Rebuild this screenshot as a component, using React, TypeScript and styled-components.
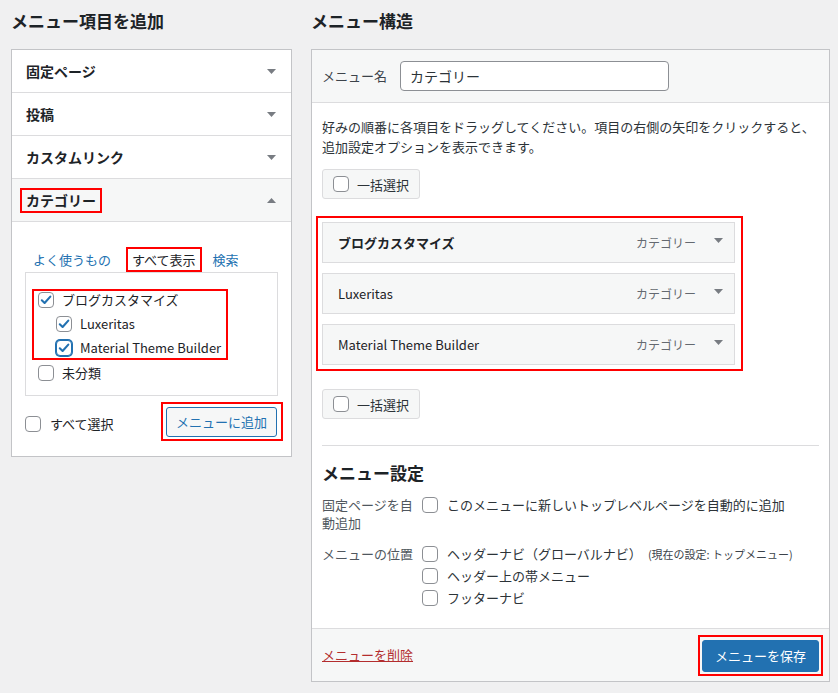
import React from "react";
import styled, { createGlobalStyle } from "styled-components";

const GlobalStyle = createGlobalStyle`
  html, body { margin: 0; padding: 0; background: #f0f0f1; }
  body {
    font-family: "Noto Sans CJK JP", "Noto Sans", sans-serif;
    color: #1d2327;
    font-size: 13px;
  }
  * { box-sizing: border-box; }
`;

const Page = styled.div`
  display: flex;
  align-items: flex-start;
  gap: 19px;
  width: 838px;
  padding: 10px 8px 12px 11px;
`;

const Column = styled.div<{ $w: number }>`
  width: ${(p) => p.$w}px;
  flex: none;
`;

const Title = styled.h2`
  margin: 0 0 17px;
  font-size: 17px;
  line-height: 22px;
  font-weight: 700;
  color: #1d2327;
`;

const Panel = styled.div`
  background: #fff;
  border: 1px solid #c3c4c7;
`;

/* ---------- left: accordion ---------- */
const AccRow = styled.div<{ $open?: boolean }>`
  display: flex;
  align-items: center;
  justify-content: space-between;
  height: 43px;
  padding: 0 15px 0 14px;
  border-bottom: 1px solid #dcdcde;
  background: ${(p) => (p.$open ? "#f6f7f7" : "#fff")};
  font-size: 14px;
  font-weight: 700;
  line-height: 20px;
  color: #1d2327;
`;

const MarkedTitle = styled.span`
  border: 2px solid #f00;
  margin-left: -6px;
  padding: 0 4px;
  line-height: 21px;
`;

const CatBody = styled.div`
  padding: 25px 13px 15px;
`;

const Tabs = styled.div`
  display: flex;
  height: 25px;
  font-size: 13px;
`;

const Tab = styled.span<{ $active?: boolean; $ml?: number }>`
  margin-left: ${(p) => p.$ml ?? 0}px;
  padding: ${(p) => (p.$active ? "0 4px" : "0 8px")};
  line-height: ${(p) => (p.$active ? "21px" : "25px")};
  border: ${(p) => (p.$active ? "2px solid #f00" : "none")};
  background: ${(p) => (p.$active ? "#fff" : "transparent")};
  color: ${(p) => (p.$active ? "#1d2327" : "#2271b1")};
`;

const ListBox = styled.div`
  display: flex;
  flex-direction: column;
  align-items: flex-start;
  border: 1px solid #dcdcde;
  padding: 16px 6px 13px;
`;

const MarkedList = styled.div`
  border: 2px solid #f00;
  padding: 0 5px 1px 4px;
  display: flex;
  flex-direction: column;
  gap: 6px;
`;

const CheckRow = styled.label<{ $indent?: number; $mt?: number; $ml?: number }>`
  display: flex;
  align-items: center;
  gap: 8px;
  height: 18px;
  font-size: 13px;
  line-height: 18px;
  white-space: nowrap;
  padding-left: ${(p) => p.$indent ?? 0}px;
  margin-top: ${(p) => p.$mt ?? 0}px;
  margin-left: ${(p) => p.$ml ?? 0}px;
  color: #1d2327;
`;

const BottomRow = styled.div`
  display: flex;
  align-items: center;
  justify-content: space-between;
  margin-top: 6px;
`;

const SelectAll = styled.label`
  display: flex;
  align-items: center;
  gap: 9px;
  padding-top: 5px;
  font-size: 13px;
  line-height: 18px;
`;

const MarkedBtn = styled.div<{ $pad: string; $mr?: number }>`
  display: flex;
  border: 2px solid #f00;
  padding: ${(p) => p.$pad};
  margin-right: ${(p) => p.$mr ?? 0}px;
`;

const SecondaryButton = styled.button`
  height: 30px;
  padding: 0 9px;
  border: 1px solid #2271b1;
  border-radius: 3px;
  background: #f6f7f7;
  color: #2271b1;
  font-family: inherit;
  font-size: 13px;
  line-height: 28px;
`;

/* ---------- checkbox ---------- */
const Box = styled.span<{ $focus?: boolean }>`
  width: 16px;
  height: 16px;
  flex: none;
  display: inline-flex;
  align-items: center;
  justify-content: center;
  border: 1px solid ${(p) => (p.$focus ? "#2271b1" : "#8c8f94")};
  box-shadow: ${(p) => (p.$focus ? "0 0 0 1px #2271b1" : "none")};
  border-radius: 4px;
  background: #fff;
`;

const Checkbox = ({ checked, focus }: { checked?: boolean; focus?: boolean }) => (
  <Box $focus={focus}>
    {checked && (
      <svg width="14" height="14" viewBox="0 0 14 14">
        <path
          d="M2.8 7.3 L5.6 10 L11.3 3.6"
          fill="none"
          stroke="#2271b1"
          strokeWidth="2.1"
          strokeLinecap="round"
          strokeLinejoin="round"
        />
      </svg>
    )}
  </Box>
);

const Arrow = ({ up }: { up?: boolean }) => (
  <svg width="9" height="5" viewBox="0 0 9 5">
    <polygon points={up ? "0,5 9,5 4.5,0" : "0,0 9,0 4.5,5"} fill="#787c82" />
  </svg>
);

/* ---------- right: menu structure ---------- */
const Header = styled.div`
  display: flex;
  align-items: center;
  gap: 13px;
  height: 53px;
  padding: 0 10px;
  background: #f6f7f7;
  border-bottom: 1px solid #dcdcde;
`;

const FieldLabel = styled.span`
  font-size: 13px;
  line-height: 18px;
  color: #3c434a;
`;

const NameInput = styled.input`
  width: 269px;
  height: 30px;
  padding: 0 9px;
  border: 1px solid #8c8f94;
  border-radius: 4px;
  background: #fff;
  font-family: inherit;
  font-size: 14px;
  color: #2c3338;
  outline: none;
`;

const Body = styled.div`
  padding: 14px 10px 21px;
`;

const Description = styled.p`
  margin: 0;
  font-size: 13px;
  line-height: 20px;
  color: #2c3338;
`;

const BulkButton = styled.label<{ $mt: number }>`
  display: flex;
  align-items: center;
  gap: 8px;
  width: 98px;
  height: 30px;
  margin-top: ${(p) => p.$mt}px;
  padding: 0 10px;
  background: #f6f7f7;
  border: 1px solid #dcdcde;
  border-radius: 3px;
  font-size: 13px;
  color: #2c3338;
`;

const MarkedItems = styled.div`
  width: 427px;
  margin: 17px 0 0 -6px;
  border: 2px solid #f00;
  padding: 4px 6px 4px 4px;
  display: flex;
  flex-direction: column;
  gap: 10px;
`;

const Item = styled.div`
  display: flex;
  align-items: center;
  height: 41px;
  padding: 0 11px 0 15px;
  background: #f6f7f7;
  border: 1px solid #dcdcde;
`;

const ItemTitle = styled.span<{ $jp?: boolean }>`
  font-size: 13px;
  font-weight: ${(p) => (p.$jp ? 700 : 400)};
  line-height: 18px;
  color: #1d2327;
`;

const ItemType = styled.span`
  margin-left: auto;
  font-size: 12px;
  line-height: 18px;
  color: #646970;
`;

const ItemArrow = styled.span`
  display: flex;
  margin: 0 0 4px 18px;
`;

const Separator = styled.hr`
  margin: 26px 0 0;
  border: 0;
  border-top: 1px solid #dcdcde;
`;

const SubTitle = styled.h3`
  margin: 16px 0 12px;
  font-size: 17px;
  line-height: 22px;
  font-weight: 700;
  color: #1d2327;
`;

const SettingRow = styled.div<{ $mt?: number }>`
  display: flex;
  gap: 5px;
  margin-top: ${(p) => p.$mt ?? 0}px;
`;

const SettingLabel = styled.div`
  width: 95px;
  flex: none;
  font-size: 13px;
  line-height: 18px;
  color: #50575e;
`;

const Options = styled.div`
  display: flex;
  flex-direction: column;
  gap: 4px;
`;

const Option = styled.label`
  display: flex;
  align-items: center;
  gap: 9px;
  height: 18px;
  font-size: 13px;
  line-height: 18px;
  color: #2c3338;
  white-space: nowrap;
`;

const Note = styled.span`
  margin-left: 6px;
  font-size: 11px;
  color: #3c434a;
`;

const Footer = styled.div`
  display: flex;
  align-items: center;
  justify-content: space-between;
  height: 53px;
  padding: 0 6px 0 10px;
  background: #f6f7f7;
  border-top: 1px solid #dcdcde;
`;

const DeleteLink = styled.a`
  font-size: 13px;
  line-height: 18px;
  color: #b32d2e;
  text-decoration: underline;
`;

const PrimaryButton = styled.button`
  width: 117px;
  height: 32px;
  padding: 0;
  border: 1px solid #2271b1;
  border-radius: 3px;
  background: #2271b1;
  color: #fff;
  font-family: inherit;
  font-size: 13px;
  line-height: 30px;
`;

const items = [
  { title: "ブログカスタマイズ", jp: true },
  { title: "Luxeritas" },
  { title: "Material Theme Builder" },
];

export default function App() {
  return (
    <>
      <GlobalStyle />
      <Page>
        <Column $w={281}>
          <Title>メニュー項目を追加</Title>
          <Panel>
            <AccRow>
              固定ページ
              <Arrow />
            </AccRow>
            <AccRow>
              投稿
              <Arrow />
            </AccRow>
            <AccRow>
              カスタムリンク
              <Arrow />
            </AccRow>
            <AccRow $open>
              <MarkedTitle>カテゴリー</MarkedTitle>
              <Arrow up />
            </AccRow>
            <CatBody>
              <Tabs>
                <Tab>よく使うもの</Tab>
                <Tab $active $ml={7}>すべて表示</Tab>
                <Tab $ml={3}>検索</Tab>
              </Tabs>
              <ListBox>
                <MarkedList>
                  <CheckRow>
                    <Checkbox checked />
                    ブログカスタマイズ
                  </CheckRow>
                  <CheckRow $indent={18}>
                    <Checkbox checked />
                    Luxeritas
                  </CheckRow>
                  <CheckRow $indent={18}>
                    <Checkbox checked focus />
                    Material Theme Builder
                  </CheckRow>
                </MarkedList>
                <CheckRow $mt={4} $ml={6}>
                  <Checkbox />
                  未分類
                </CheckRow>
              </ListBox>
              <BottomRow>
                <SelectAll>
                  <Checkbox />
                  すべて選択
                </SelectAll>
                <MarkedBtn $pad="3px 4px 2px 3px" $mr={-5}>
                  <SecondaryButton>メニューに追加</SecondaryButton>
                </MarkedBtn>
              </BottomRow>
            </CatBody>
          </Panel>
        </Column>

        <Column $w={519}>
          <Title>メニュー構造</Title>
          <Panel>
            <Header>
              <FieldLabel>メニュー名</FieldLabel>
              <NameInput defaultValue="カテゴリー" />
            </Header>
            <Body>
              <Description>
                好みの順番に各項目をドラッグしてください。項目の右側の矢印をクリックすると、
                <br />
                追加設定オプションを表示できます。
              </Description>
              <BulkButton $mt={12}>
                <Checkbox />
                一括選択
              </BulkButton>
              <MarkedItems>
                {items.map((it) => (
                  <Item key={it.title}>
                    <ItemTitle $jp={it.jp}>{it.title}</ItemTitle>
                    <ItemType>カテゴリー</ItemType>
                    <ItemArrow>
                      <Arrow />
                    </ItemArrow>
                  </Item>
                ))}
              </MarkedItems>
              <BulkButton $mt={18}>
                <Checkbox />
                一括選択
              </BulkButton>
              <Separator />
              <SubTitle>メニュー設定</SubTitle>
              <SettingRow>
                <SettingLabel>固定ページを自動追加</SettingLabel>
                <Options>
                  <Option>
                    <Checkbox />
                    このメニューに新しいトップレベルページを自動的に追加
                  </Option>
                </Options>
              </SettingRow>
              <SettingRow $mt={13}>
                <SettingLabel>メニューの位置</SettingLabel>
                <Options>
                  <Option>
                    <Checkbox />
                    <span>
                      ヘッダーナビ（グローバルナビ）
                      <Note>(現在の設定: トップメニュー)</Note>
                    </span>
                  </Option>
                  <Option>
                    <Checkbox />
                    ヘッダー上の帯メニュー
                  </Option>
                  <Option>
                    <Checkbox />
                    フッターナビ
                  </Option>
                </Options>
              </SettingRow>
            </Body>
            <Footer>
              <DeleteLink href="#">メニューを削除</DeleteLink>
              <MarkedBtn $pad="3px 2px 2px 2px">
                <PrimaryButton>メニューを保存</PrimaryButton>
              </MarkedBtn>
            </Footer>
          </Panel>
        </Column>
      </Page>
    </>
  );
}
